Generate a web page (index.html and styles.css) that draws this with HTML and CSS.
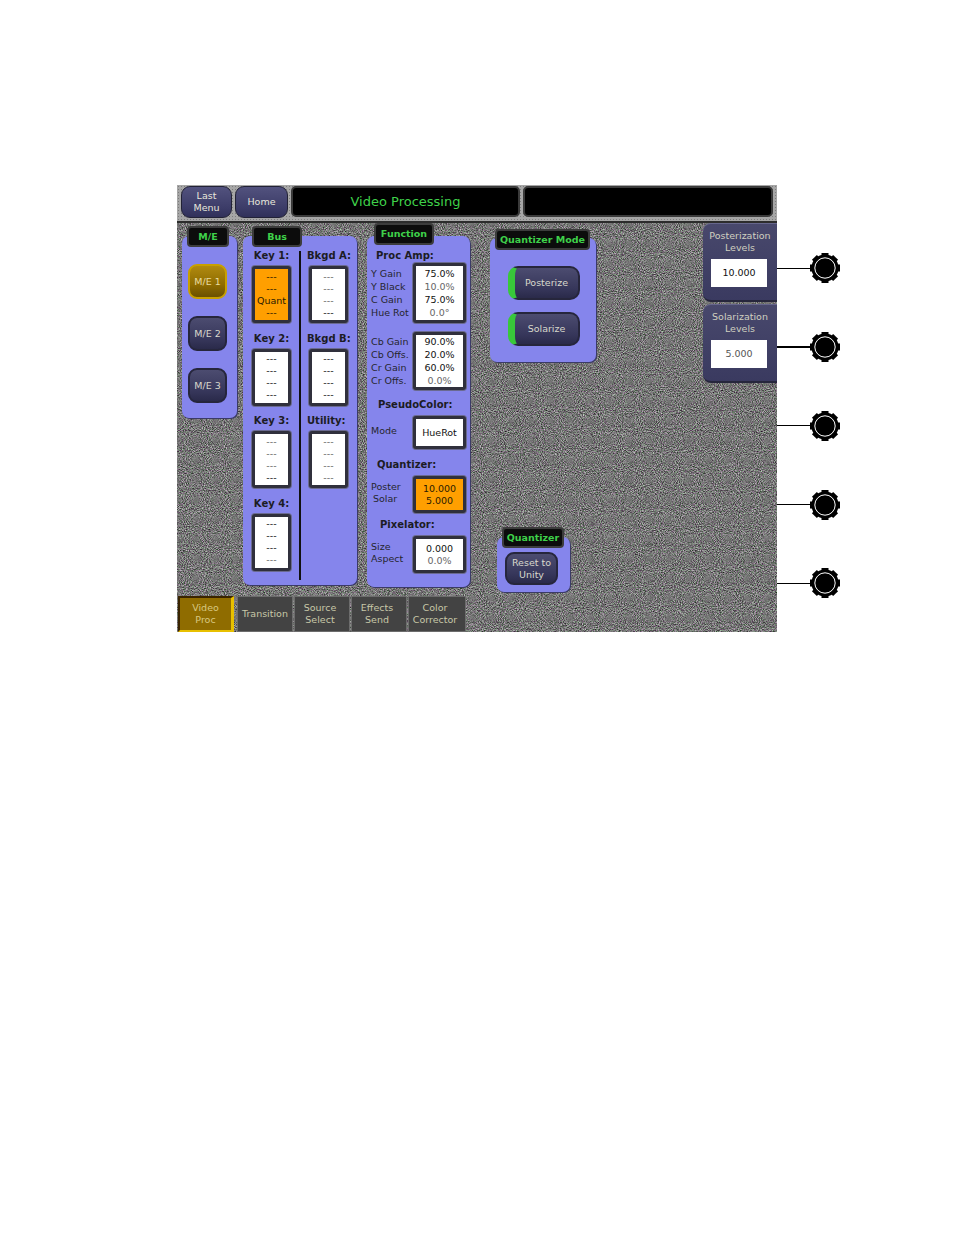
FILE: index.html
```html
<!DOCTYPE html>
<html>
<head>
  <meta charset="utf-8">
  <link rel="stylesheet" href="styles.css">
</head>
<body>
  <svg class="defs" width="0" height="0">
    <symbol id="knob" viewBox="0 0 30 30">
      <circle cx="15" cy="15" r="13.6" fill="#000"/>
      <g fill="#000">
        <rect x="11.5" y="0" width="7" height="30"/>
        <rect x="0" y="11.5" width="30" height="7"/>
        <rect x="11.5" y="0" width="7" height="30" transform="rotate(45 15 15)"/>
        <rect x="11.5" y="0" width="7" height="30" transform="rotate(-45 15 15)"/>
      </g>
      <circle cx="15" cy="15" r="10.2" fill="#000" stroke="#fff" stroke-width="1"/>
    </symbol>
  </svg>

  <div class="page">
    <div class="screen">
      <div class="topbar">
        <button class="nav-btn nav-last">Last<br>Menu</button>
        <button class="nav-btn nav-home">Home</button>
        <div class="title">Video Processing</div>
        <div class="title title-blank"></div>
      </div>

      <div class="main">
        <div class="panel me-panel">
          <div class="tag me-tag">M/E</div>
          <button class="dark-btn me-btn active">M/E 1</button>
          <button class="dark-btn me-btn">M/E 2</button>
          <button class="dark-btn me-btn">M/E 3</button>
        </div>

        <div class="panel bus-panel">
          <div class="tag bus-tag">Bus</div>
          <div class="bus-cols">
            <div class="bus-col">
              <div class="slot">
                <div class="heading">Key 1:</div>
                <div class="box slot-box orange"><span>---</span><span>---</span><span>Quant</span><span>---</span></div>
              </div>
              <div class="slot">
                <div class="heading">Key 2:</div>
                <div class="box slot-box"><span>---</span><span>---</span><span>---</span><span>---</span></div>
              </div>
              <div class="slot">
                <div class="heading">Key 3:</div>
                <div class="box slot-box"><span class="dim">---</span><span class="dim">---</span><span class="dim">---</span><span>---</span></div>
              </div>
              <div class="slot">
                <div class="heading">Key 4:</div>
                <div class="box slot-box"><span>---</span><span>---</span><span>---</span><span class="dim">---</span></div>
              </div>
            </div>
            <div class="bus-divider"></div>
            <div class="bus-col bus-col-right">
              <div class="slot">
                <div class="heading">Bkgd A:</div>
                <div class="box slot-box"><span class="dim">---</span><span class="dim">---</span><span class="dim">---</span><span>---</span></div>
              </div>
              <div class="slot">
                <div class="heading">Bkgd B:</div>
                <div class="box slot-box"><span>---</span><span>---</span><span>---</span><span>---</span></div>
              </div>
              <div class="slot">
                <div class="heading">Utility:</div>
                <div class="box slot-box"><span class="dim">---</span><span class="dim">---</span><span class="dim">---</span><span class="dim">---</span></div>
              </div>
            </div>
          </div>
        </div>

        <div class="panel func-panel">
          <div class="tag func-tag">Function</div>
          <div class="heading func-head head-proc">Proc Amp:</div>
          <div class="func-row row-60">
            <div class="func-names"><span>Y Gain</span><span>Y Black</span><span>C Gain</span><span>Hue Rot</span></div>
            <div class="box val-box"><span>75.0%</span><span class="dim">10.0%</span><span>75.0%</span><span class="dim">0.0°</span></div>
          </div>
          <div class="func-row row-58">
            <div class="func-names"><span>Cb Gain</span><span>Cb Offs.</span><span>Cr Gain</span><span>Cr Offs.</span></div>
            <div class="box val-box"><span>90.0%</span><span>20.0%</span><span>60.0%</span><span class="dim">0.0%</span></div>
          </div>
          <div class="heading func-head head-pseudo">PseudoColor:</div>
          <div class="func-row row-33">
            <div class="func-names"><span>Mode</span></div>
            <div class="box val-box"><span>HueRot</span></div>
          </div>
          <div class="heading func-head head-quant">Quantizer:</div>
          <div class="func-row row-37">
            <div class="func-names"><span>Poster</span><span class="indent">Solar</span></div>
            <div class="box val-box orange"><span>10.000</span><span>5.000</span></div>
          </div>
          <div class="heading func-head head-pixel">Pixelator:</div>
          <div class="func-row row-37">
            <div class="func-names"><span>Size</span><span>Aspect</span></div>
            <div class="box val-box"><span>0.000</span><span class="dim">0.0%</span></div>
          </div>
        </div>

        <div class="mid-col">
          <div class="panel mode-panel">
            <div class="tag mode-tag">Quantizer Mode</div>
            <button class="dark-btn mode-btn">Posterize</button>
            <button class="dark-btn mode-btn">Solarize</button>
          </div>
          <div class="panel quant-panel">
            <div class="tag quant-tag">Quantizer</div>
            <button class="dark-btn reset-btn">Reset to<br>Unity</button>
          </div>
        </div>

        <div class="levels">
          <div class="level-card">
            <div class="level-name">Posterization<br>Levels</div>
            <div class="level-val">10.000</div>
          </div>
          <div class="level-card">
            <div class="level-name">Solarization<br>Levels</div>
            <div class="level-val dim">5.000</div>
          </div>
        </div>
      </div>

      <div class="tabs">
        <div class="tab tab-active">Video<br>Proc</div>
        <div class="tab">Transition</div>
        <div class="tab tab-text-left">Source<br>Select</div>
        <div class="tab tab-text-left">Effects<br>Send</div>
        <div class="tab tab-last tab-text-left">Color<br>Corrector</div>
      </div>
    </div>

    <div class="knobs">
      <div class="knob-row"><div class="knob-line"></div><svg class="knob"><use href="#knob"/></svg></div>
      <div class="knob-row"><div class="knob-line thick"></div><svg class="knob"><use href="#knob"/></svg></div>
      <div class="knob-row"><div class="knob-line"></div><svg class="knob"><use href="#knob"/></svg></div>
      <div class="knob-row"><div class="knob-line"></div><svg class="knob"><use href="#knob"/></svg></div>
      <div class="knob-row"><div class="knob-line"></div><svg class="knob"><use href="#knob"/></svg></div>
    </div>
  </div>
</body>
</html>
```

FILE: styles.css
```css
* {
  box-sizing: border-box;
}

body {
  margin: 0;
  background-color: #fff;
  font-family: "DejaVu Sans", sans-serif;
  font-size: 10px;
  color: #222;
}

button {
  font-family: inherit;
  padding: 0;
  cursor: pointer;
}

.defs {
  position: absolute;
}

.page {
  display: flex;
  align-items: flex-start;
  padding: 185px 0 0 177px;
}

.screen {
  width: 600px;
  height: 447px;
  display: flex;
  flex-direction: column;
  background-color: #767676;
  /* grainy gray of the panel surface */
  background-image: url("data:image/svg+xml,%3Csvg xmlns='http://www.w3.org/2000/svg' width='256' height='256'%3E%3Cfilter id='n' x='0' y='0' width='100%25' height='100%25' color-interpolation-filters='sRGB'%3E%3CfeTurbulence type='fractalNoise' baseFrequency='0.95' numOctaves='2' seed='7' stitchTiles='stitch'/%3E%3CfeColorMatrix type='matrix' values='0.9 0.2 0 0 -0.09  0.9 -0.2 0 0 0.11  0.9 0.2 0 0 -0.09  0 0 0 0 1'/%3E%3C/filter%3E%3Crect width='256' height='256' filter='url(%23n)'/%3E%3C/svg%3E");
}

/* top bar */

.topbar {
  height: 38px;
  display: flex;
  gap: 3px;
  padding: 1px 3px 0 4px;
  background-color: #a6a6a6;
  background-image: radial-gradient(circle, #7c7c7c 0.6px, transparent 0.7px);
  background-size: 3px 3px;
  border-bottom: 2px solid #2c2c2c;
}

.nav-btn {
  height: 32px;
  border: 1px solid #222236;
  border-radius: 9px;
  background: linear-gradient(#52527e, #3c3c68 70%, #30305a);
  color: #e8e8dc;
  font-size: 9.5px;
  line-height: 12px;
}

.nav-last {
  width: 51px;
}

.nav-home {
  width: 53px;
}

.title {
  width: 229px;
  height: 31px;
  background-color: #000;
  border: 2px solid #3a3a3a;
  border-radius: 5px;
  color: #3fd14a;
  font-size: 13px;
  line-height: 27px;
  text-align: center;
}

.title-blank {
  width: 250px;
}

/* panels */

.main {
  flex: 1;
  display: flex;
  align-items: flex-start;
  padding: 13px 0 0 5px;
}

.panel {
  display: flex;
  flex-direction: column;
  align-items: flex-start;
  background-color: #8585ec;
  background-image: radial-gradient(circle, #7676dc 0.6px, transparent 0.7px);
  background-size: 2px 2px;
  border-radius: 7px;
  box-shadow: 1px 1px 0 #3b3b66;
}

.tag {
  height: 21px;
  background-color: #0c0c0c;
  border: 2px solid #3c3c3c;
  border-radius: 4px;
  color: #3fd14a;
  font-size: 9.5px;
  font-weight: bold;
  line-height: 17px;
  text-align: center;
  white-space: nowrap;
}

.heading {
  height: 14px;
  color: #1c1c24;
  font-size: 10px;
  font-weight: bold;
  line-height: 14px;
  text-align: center;
  white-space: nowrap;
}

.dark-btn {
  border: 2px solid #26263c;
  border-radius: 9px;
  background: linear-gradient(#4c4c70, #36365a 70%, #2a2a4a);
  color: #d8d8cc;
  font-size: 9.5px;
  line-height: 12px;
}

.box {
  display: flex;
  flex-direction: column;
  align-items: center;
  justify-content: center;
  background-color: #fff;
  border: 3px solid #30303c;
  border-radius: 3px;
  box-shadow: 0 0 0 1px #6a6a90;
  color: #111;
  font-size: 9.5px;
  line-height: 13px;
}

.dim {
  color: #666;
}

.orange {
  background-color: #ff9f00;
  color: #2a1a00;
}

/* M/E column */

.me-panel {
  width: 55px;
  height: 182px;
}

.me-tag {
  width: 42px;
  margin: -10px 0 0 5px;
}

.me-btn {
  width: 39px;
  height: 35px;
  margin: 17px 0 0 6px;
}

.me-btn.active {
  background: linear-gradient(#b08a10, #8f6c00 60%, #6a5000);
  border-color: #c8a000;
  color: #e8dca0;
}

/* bus column */

.bus-panel {
  width: 114px;
  height: 349px;
  margin-left: 6px;
}

.bus-tag {
  width: 50px;
  margin: -10px 0 0 9px;
}

.bus-cols {
  width: 100%;
  display: flex;
  margin-top: 2px;
}

.bus-col {
  width: 56px;
  padding-left: 9px;
}

.bus-col-right {
  padding-left: 8px;
}

.bus-divider {
  width: 2px;
  height: 329px;
  margin-top: 2px;
  background-color: #111;
}

.slot {
  width: 39px;
  height: 82.5px;
}

.slot .heading {
  margin: 0 -10px 3px;
}

.bus-col-right .heading {
  margin-left: -2px;
  text-align: left;
}

.slot-box {
  width: 39px;
  height: 57px;
  line-height: 12px;
}

/* function column */

.func-panel {
  width: 103px;
  height: 351px;
  margin-left: 10px;
}

.func-tag {
  width: 60px;
  height: 22px;
  margin: -13px 0 0 7px;
  line-height: 18px;
}

.func-head {
  margin-top: 3px;
}

.func-row {
  width: 100%;
  display: flex;
  align-items: center;
  justify-content: space-between;
  padding: 0 4px;
}

.func-names {
  display: flex;
  flex-direction: column;
  color: #26262e;
  font-size: 9.5px;
  line-height: 13px;
  white-space: nowrap;
}

.indent {
  padding-left: 2px;
}

.val-box {
  width: 53px;
  height: 100%;
}

.row-60 {
  height: 60px;
}

.row-58 {
  height: 58px;
  margin-top: 9px;
}

.row-33,
.row-37 {
  margin-top: 4px;
}

.row-33 {
  height: 33px;
}

.row-37 {
  height: 37px;
}

.row-33 .func-names,
.row-37 .func-names {
  margin-top: -4px;
  line-height: 12px;
}

.row-37 .val-box {
  line-height: 12px;
}

.head-proc {
  margin: 4px 0 0 9px;
}

.head-pseudo {
  margin: 8px 0 0 11px;
}

.head-quant {
  margin: 9px 0 0 10px;
}

.head-pixel {
  margin: 5px 0 0 13px;
}

/* middle column */

.mid-col {
  width: 106px;
  margin-left: 20px;
}

.mode-panel {
  width: 106px;
  height: 124px;
  margin-top: 2px;
}

.mode-tag {
  width: 95px;
  margin: -9px 0 0 5px;
}

.mode-btn {
  width: 72px;
  height: 34px;
  margin: 16px 0 0 18px;
  border-left: 7px solid #38c83a;
  border-radius: 10px;
}

.mode-btn + .mode-btn {
  margin-top: 12px;
}

.quant-panel {
  width: 73px;
  height: 55px;
  margin: 175px 0 0 7px;
}

.quant-tag {
  width: 62px;
  margin: -10px 0 0 5px;
}

.reset-btn {
  width: 53px;
  height: 33px;
  margin: 4px 0 0 8px;
}

/* levels on the right edge */

.levels {
  margin-top: -13px;
  margin-left: auto;
  display: flex;
  flex-direction: column;
  gap: 2px;
}

.level-card {
  width: 74px;
  height: 79px;
  padding-top: 6px;
  background: linear-gradient(#48486c, #3a3a60);
  border-top: 1px solid #66668c;
  border-bottom: 2px solid #26263c;
  border-radius: 8px 0 0 8px;
  color: #d0d0c0;
  font-size: 9.5px;
  line-height: 12px;
  text-align: center;
}

.level-val {
  width: 56px;
  height: 28px;
  margin: 5px 0 0 8px;
  background-color: #fff;
  color: #111;
  line-height: 28px;
}

.level-val.dim {
  color: #555;
}

/* tabs */

.tabs {
  height: 36px;
  display: flex;
  gap: 1px;
  padding-left: 1px;
}

.tab {
  width: 56px;
  display: flex;
  align-items: center;
  justify-content: center;
  background-color: #434343;
  background-image: radial-gradient(circle, #5c5c5c 0.6px, transparent 0.7px);
  background-size: 2px 2px;
  border: 1px solid #6c6c6c;
  color: #c8c8a8;
  font-size: 9.5px;
  line-height: 12px;
  text-align: center;
}

.tab-text-left {
  padding-right: 4px;
}

.tab-active {
  margin-right: 2px;
  background-color: #8f6c00;
  background-image: radial-gradient(circle, #a8861c 0.6px, transparent 0.7px);
  border-width: 2px 3px 2px 2px;
  border-color: #3a2400 #e8c000 #e8c000 #3a2400;
  color: #d8c880;
}

.tab-last {
  width: 58px;
}

/* knobs outside the screen */

.knobs {
  display: grid;
  grid-auto-rows: 78.75px;
  padding-top: 44px;
}

.knob-row {
  display: flex;
  align-items: center;
}

.knob-line {
  width: 33px;
  height: 1px;
  background-color: #000;
}

.knob-line.thick {
  height: 2px;
}

.knob {
  width: 30px;
  height: 30px;
}
```
